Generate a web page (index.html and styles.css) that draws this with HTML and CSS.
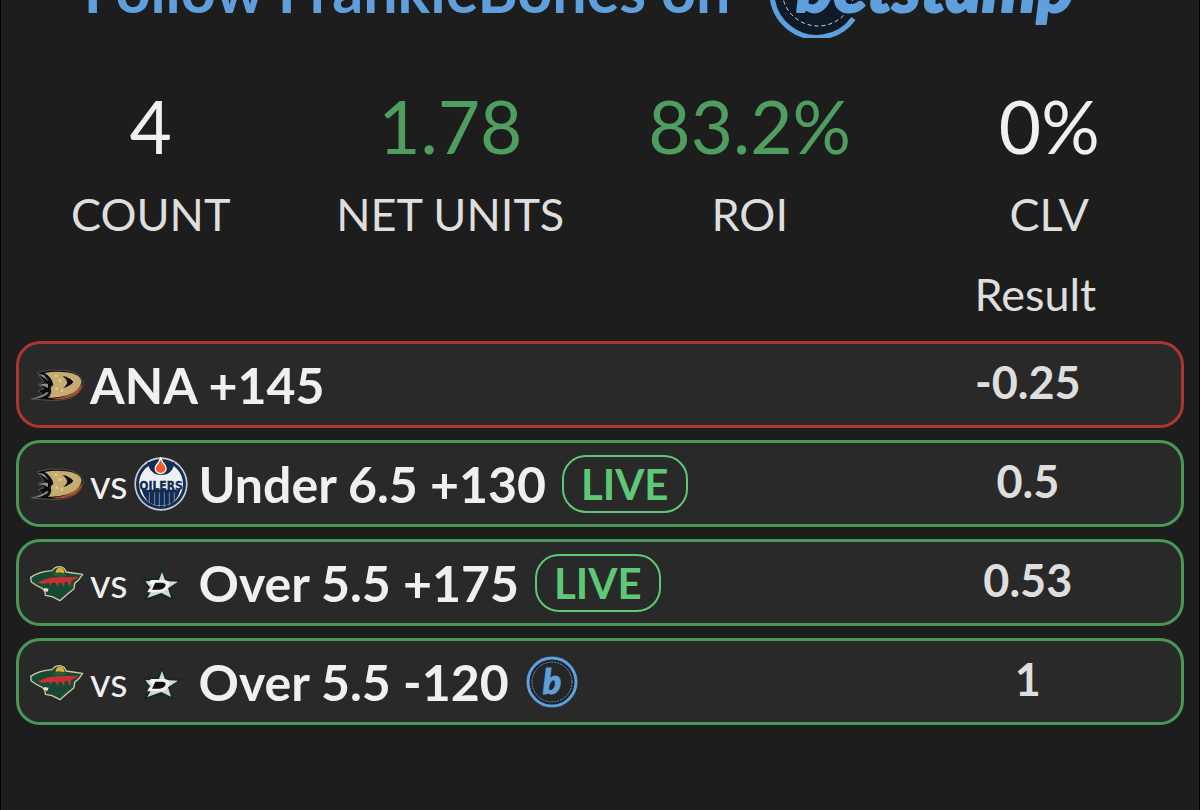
FILE: index.html
```html
<!DOCTYPE html>
<html lang="en">
<head>
    <meta charset="UTF-8">
    <meta name="viewport" content="width=device-width, initial-scale=1.0">
    <title>FrankieBones on betstamp</title>
    <link rel="stylesheet" href="styles.css">
</head>
<body>
    <!-- team icons -->
    <svg class="sprite" aria-hidden="true">
        <symbol id="ducks" viewBox="0 0 162 162">
            <path d="M22 44 Q60 32 100 37 Q150 42 160 70 Q160 104 122 120 Q90 130 48 126 L4 123 L38 112 L26 98 L42 92 L24 79 L42 72 Z" fill="#0c0c0c" stroke="#77716a" stroke-width="2"/>
            <path d="M62 122 Q124 120 157 78 Q154 106 122 118 Q92 128 62 122Z" fill="#a5502c"/>
            <path d="M44 45 Q76 38 108 43 Q152 48 155 72 Q150 98 112 112 Q84 121 54 119 Q68 106 62 92 Q62 86 70 80 Q66 58 44 45Z" fill="#c6ab72"/>
            <path d="M98 54 Q120 58 130 72 Q120 84 100 90 Q112 80 112 72 Q108 62 98 54Z" fill="#0c0c0c"/>
            <path d="M24 47 L42 51 L56 70 Q44 60 24 47Z M26 82 Q42 74 54 78 L54 90 Q42 82 26 82Z M6 123 Q36 116 50 102 L56 104 Q40 122 6 123Z" fill="#8c8f92"/>
            <g fill="#e3c98f"><circle cx="78" cy="54" r="4"/><circle cx="90" cy="68" r="5"/><circle cx="80" cy="92" r="5"/><circle cx="96" cy="98" r="4"/></g>
        </symbol>
        <symbol id="oilers" viewBox="0 0 162 162">
            <circle cx="81" cy="81" r="80" fill="#c9cdd2"/>
            <circle cx="81" cy="81" r="75" fill="#142c54"/>
            <circle cx="81" cy="81" r="66" fill="#eef0f2"/>
            <path d="M40 16 L122 16 Q116 54 82 54 Q48 54 40 16Z" fill="#142c54"/>
            <path d="M23 98 H139 Q134 122 114 138 Q82 154 48 138 Q30 124 23 98Z" fill="#142c54"/>
            <path d="M46 106V139 M62 106V146 M76 106V149 M91 106V149 M106 106V145 M121 106V134" stroke="#aab4c4" stroke-width="2"/>
            <path d="M80 3 Q84 16 94 26 Q102 46 80 50 Q58 46 66 26 Q76 16 80 3Z" fill="#f15a2b" stroke="#fff" stroke-width="4"/>
            <text class="oilers-name" x="81" y="100" text-anchor="middle">OILERS</text>
        </symbol>
        <symbol id="wild" viewBox="0 0 162 162">
            <path d="M2 64 Q28 46 66 44 Q74 32 90 32 Q104 34 108 48 L158 55 Q148 72 134 82 L132 98 L110 116 L90 134 L66 122 L46 118 Q46 104 38 98 Q20 90 4 78Z" fill="#174a35" stroke="#cfc8a4" stroke-width="4" stroke-linejoin="round"/>
            <circle cx="90" cy="48" r="13" fill="#e4aa2f"/>
            <path d="M68 54 Q92 42 112 58 L98 62 L70 60Z" fill="#285b35"/>
            <path d="M24 80 Q50 64 84 64 L146 62 Q136 72 124 74 L120 94 L112 78 L104 78 L102 94 L94 80 L86 80 L84 93 L76 80 L66 80 L62 90 L56 80 L40 84 Z" fill="#c92f36"/>
            <path d="M42 96 L56 98 L52 108 L42 104Z" fill="#eee4c5"/>
        </symbol>
        <symbol id="stars" viewBox="0 0 162 162">
            <path d="M84 34 L97 68 L145 71 L108 97 L120 136 L84 119 L26 136 L44 99 L22 68 L68 68Z" fill="#102b25"/>
            <path d="M84 48 L94 75 L132 77 L102 97 L111 125 L82 111 L40 126 L54 101 L34 76 L74 74Z" fill="#d3d5d6"/>
            <path d="M50 72 H90 Q110 74 106 88 Q100 108 78 109 H40 L46 97 H51 L55 85 H45Z" fill="#f3f3f3"/>
            <path d="M64 80 H86 Q98 82 94 90 Q90 100 76 101 H54Z" fill="#111"/>
        </symbol>
    </svg>

    <header class="banner">
        <h1>Follow FrankieBones on</h1>
        <svg class="logo" viewBox="0 0 310 96" role="img" aria-label="betstamp">
            <path d="M83.500 76.500 A45 45 0 1 1 76 16" fill="#111b28" stroke="#5f9fdc" stroke-width="5"/>
            <circle cx="48" cy="48" r="36" fill="none" stroke="#d5d9dd" stroke-width="1" stroke-dasharray="4 3"/>
            <text class="logo-name" x="26" y="70">betstamp</text>
        </svg>
    </header>

    <main>
        <dl class="stats">
            <div class="stat"><dt>COUNT</dt><dd>4</dd></div>
            <div class="stat"><dt>NET UNITS</dt><dd class="up">1.78</dd></div>
            <div class="stat"><dt>ROI</dt><dd class="up">83.2%</dd></div>
            <div class="stat"><dt>CLV</dt><dd>0%</dd></div>
        </dl>

        <table class="bets">
            <thead>
                <tr>
                    <td></td>
                    <th scope="col">Result</th>
                </tr>
            </thead>
            <tbody>
                <tr class="lost">
                    <td>
                        <div class="bet">
                            <svg class="team"><use href="#ducks"/></svg>
                            <span class="pick">ANA +145</span>
                        </div>
                    </td>
                    <td class="result">-0.25</td>
                </tr>
                <tr class="won">
                    <td>
                        <div class="bet">
                            <svg class="team"><use href="#ducks"/></svg>
                            <span class="vs">vs</span>
                            <svg class="team"><use href="#oilers"/></svg>
                            <span class="pick matchup">Under 6.5 +130</span>
                            <span class="live">LIVE</span>
                        </div>
                    </td>
                    <td class="result">0.5</td>
                </tr>
                <tr class="won">
                    <td>
                        <div class="bet">
                            <svg class="team"><use href="#wild"/></svg>
                            <span class="vs">vs</span>
                            <svg class="team"><use href="#stars"/></svg>
                            <span class="pick matchup">Over 5.5 +175</span>
                            <span class="live">LIVE</span>
                        </div>
                    </td>
                    <td class="result">0.53</td>
                </tr>
                <tr class="won">
                    <td>
                        <div class="bet">
                            <svg class="team"><use href="#wild"/></svg>
                            <span class="vs">vs</span>
                            <svg class="team"><use href="#stars"/></svg>
                            <span class="pick matchup">Over 5.5 -120</span>
                            <svg class="verified" viewBox="0 0 54 54">
                                <circle cx="27" cy="27" r="24" fill="#18222e" stroke="#5f9fdc" stroke-width="3"/>
                                <circle cx="27" cy="27" r="20" fill="#242629" stroke="#8b9299" stroke-width="1" stroke-dasharray="2 1"/>
                                <text class="verified-letter" x="27" y="39" text-anchor="middle">b</text>
                            </svg>
                        </div>
                    </td>
                    <td class="result">1</td>
                </tr>
            </tbody>
        </table>
    </main>
</body>
</html>
```

FILE: styles.css
```css
* {
    box-sizing: border-box;
}

body {
    margin: 0;
    min-height: 100vh;
    border: solid #000;
    border-width: 0 1px;
    background-color: #1d1d1d;
    color: #f0f0f0;
    font-family: Lato, sans-serif;
}

.sprite {
    display: none;
}

/* banner */
.banner {
    display: flex;
    justify-content: center;
    align-items: flex-end;
    gap: 40px;
    height: 38px;
    padding-right: 36px;
    overflow: hidden;
}

h1 {
    margin: 0;
    padding-bottom: 12px;
    color: #5f9fdc;
    font-size: 61px;
    font-weight: 700;
    line-height: 72px;
    white-space: nowrap;
}

.logo {
    flex: none;
    width: 310px;
    height: 96px;
}

.logo-name {
    fill: #5f9fdc;
    stroke: #5f9fdc;
    stroke-width: 2px;
    stroke-linejoin: round;
    font-size: 69px;
    font-style: italic;
    font-weight: 900;
}

/* stats */
.stats {
    display: grid;
    grid-template-columns: repeat(4, 1fr);
    margin: 43px 0 14px;
    text-align: center;
}

.stat {
    display: flex;
    flex-direction: column-reverse;
    gap: 16px;
}

.stat dt {
    color: #dedede;
    font-size: 45px;
    line-height: 54px;
}

.stat dd {
    margin: 0;
    font-size: 73px;
    line-height: 90px;
}

.stat .up {
    color: #4f9e5f;
}

/* bets */
.bets {
    width: calc(100% - 30px);
    margin: 0 15px;
    border-collapse: separate;
    border-spacing: 0 12px;
    table-layout: fixed;
}

.bets td {
    padding: 0;
}

.bets th {
    width: 27%;
    padding: 0 0 8px 18px;
    color: #dedede;
    font-size: 45px;
    font-weight: 400;
    line-height: 54px;
}

.bets tbody td {
    height: 87px;
    border: solid #4b9659;
    border-width: 3px 0;
    background-color: #292929;
}

.bets tbody td:first-child {
    padding-left: 11px;
    border-left-width: 3px;
    border-radius: 24px 0 0 24px;
}

.bets tbody td:last-child {
    border-right-width: 3px;
    border-radius: 0 24px 24px 0;
}

.bets .lost td {
    border-color: #ae3536;
}

.bet {
    display: flex;
    align-items: center;
    gap: 6px;
    white-space: nowrap;
}

.team {
    flex: none;
    width: 54px;
    height: 54px;
}

.vs {
    font-size: 40px;
    line-height: 54px;
}

.pick {
    font-size: 50px;
    font-weight: 700;
    line-height: 60px;
}

.matchup {
    margin: 0 10px 0 5px;
}

.live {
    padding: 0 17px;
    border: 2px solid #5fc877;
    border-radius: 24px;
    color: #5fc877;
    font-size: 42px;
    font-weight: 700;
    line-height: 54px;
}

.bets .result {
    padding: 0 0 6px 6px;
    color: #dedede;
    font-size: 45px;
    font-weight: 700;
    line-height: 54px;
    text-align: center;
}

.verified {
    flex: none;
    width: 54px;
    height: 54px;
}

.verified-letter {
    fill: #5f9fdc;
    stroke: #5f9fdc;
    stroke-width: 1px;
    font-size: 34px;
    font-style: italic;
    font-weight: 900;
}

.oilers-name {
    fill: #142c54;
    stroke: #142c54;
    stroke-width: 1px;
    font-family: "DejaVu Sans Condensed", "Liberation Sans", sans-serif;
    font-size: 36px;
    font-weight: 700;
}
```
